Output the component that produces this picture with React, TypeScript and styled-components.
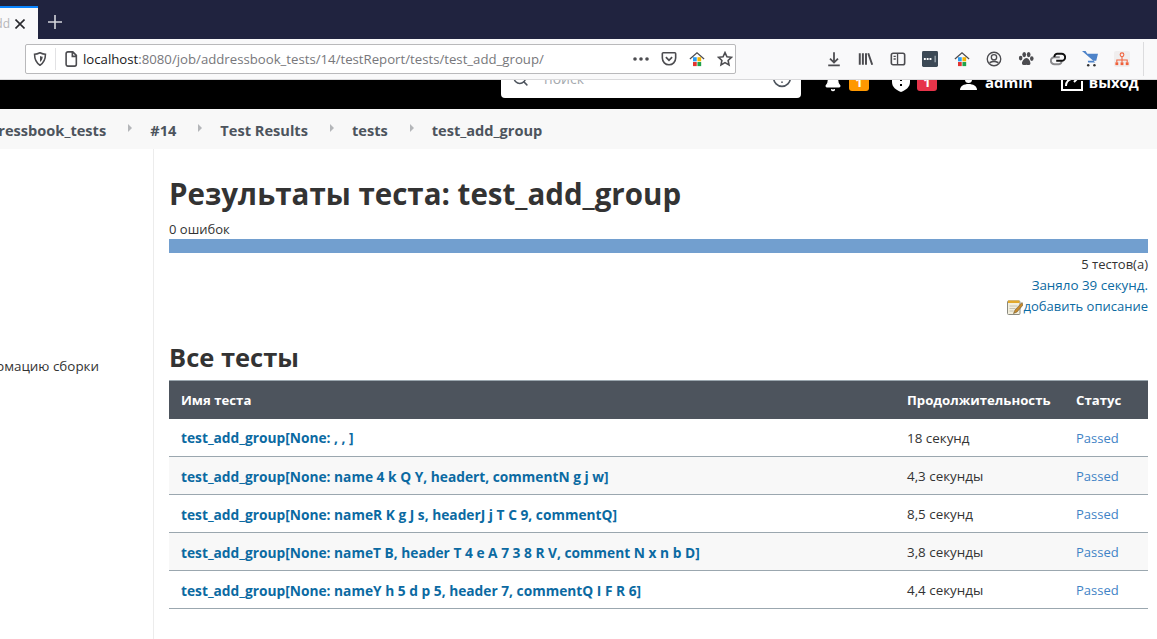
import React from 'react';
import styled, { createGlobalStyle } from 'styled-components';
import { Bell, CircleHelp, Search } from 'lucide-react';

const GlobalStyle = createGlobalStyle`
    html, body {
        background: #fff;
        height: 100%;
        margin: 0;
        overflow: hidden;
    }
    body {
        color: #333;
        font-family: "Open Sans", "Noto Sans", sans-serif;
        font-size: 13px;
    }
`;

const Page = styled.div`
    display: flex;
    flex-direction: column;
    height: 639px;
    overflow: hidden;
    width: 1157px;
`;

/* browser chrome */
const TabStrip = styled.div`
    align-items: flex-end;
    background: #20233f;
    display: flex;
    flex: none;
    height: 39px;
`;

const ActiveTab = styled.div`
    align-items: center;
    background: #f9f9fa;
    border-top: 2px solid #0a84ff;
    box-sizing: border-box;
    display: flex;
    height: 33px;
    justify-content: flex-end;
    overflow: hidden;
    padding-right: 13px;
    width: 38px;
`;

const TabTitle = styled.span`
    color: #b5b5b8;
    font-size: 12px;
    margin-right: 5px;
`;

const NewTab = styled.div`
    align-self: center;
    display: flex;
    margin: 5px 0 0 10px;
`;

const Toolbar = styled.div`
    align-items: center;
    background: #f9f9fa;
    border-bottom: 1px solid #d9d9db;
    box-sizing: border-box;
    display: flex;
    flex: none;
    height: 41px;
    overflow: hidden;
    padding: 0 0 1px 25px;
`;

const UrlBar = styled.div`
    align-items: center;
    background: #fff;
    border: 1px solid #b9b9bb;
    border-radius: 2px;
    box-sizing: border-box;
    display: flex;
    flex: none;
    height: 30px;
    padding: 0 2px 0 7px;
    width: 711px;
`;

const Divider = styled.span`
    background: #e2e2e4;
    height: 22px;
    margin: 0 7px 0 8px;
    width: 1px;
`;

const Url = styled.span`
    color: #77777b;
    flex: 1;
    font-family: "Open Sans", sans-serif;
    font-size: 13.2px;
    margin-left: 4px;
    white-space: nowrap;
`;

const Host = styled.span`
    color: #18181a;
`;

const UrlActions = styled.div`
    align-items: center;
    display: flex;
    gap: 12px;
`;

const ToolIcons = styled.div`
    align-items: center;
    display: flex;
    flex: none;
    gap: 16px;
    margin-left: 90px;
`;

const ToolbarEnd = styled.div`
    align-items: center;
    display: flex;
    flex: none;
    gap: 14px;
    margin-left: 13px;
`;

const ToolSeparator = styled.span`
    background: #dcdcde;
    height: 34px;
    width: 1px;
`;

const Dots = styled.span`
    background: repeating-linear-gradient(to bottom, #4c4c50 0 3px, transparent 3px 6px);
    height: 15px;
    width: 3px;
`;

/* jenkins header, scrolled so that only its lower part shows */
const HeaderBar = styled.header`
    align-items: flex-end;
    background: #000;
    display: flex;
    flex: none;
    height: 29px;
    overflow: hidden;
    padding-left: 501px;
`;

const SearchBox = styled.div`
    align-items: center;
    background: #fff;
    border-radius: 0 0 4px 4px;
    box-sizing: border-box;
    display: flex;
    height: 40px;
    margin-bottom: 11px;
    padding: 0 9px 0 11px;
    width: 300px;
`;

const SearchHint = styled.span`
    color: #a4a9ae;
    flex: 1;
    font-size: 14px;
    margin-left: 15px;
`;

const HeaderItem = styled.div<{ $left: number; $bottom: number }>`
    align-items: flex-end;
    color: #fff;
    display: flex;
    flex: none;
    margin-bottom: ${p => p.$bottom}px;
    margin-left: ${p => p.$left}px;
`;

const Badge = styled.span<{ $color: string }>`
    background: ${p => p.$color};
    border-radius: 0 0 3px 3px;
    color: #fff;
    font-size: 13px;
    font-weight: 700;
    height: 11px;
    line-height: 5px;
    margin-left: 7px;
    margin-bottom: 7px;
    text-align: center;
    width: 20px;
`;

const HeaderLabel = styled.span`
    font-size: 15px;
    font-weight: 700;
    line-height: 20px;
`;

const Crumbs = styled.nav`
    align-items: center;
    background: #f8f8f8;
    box-sizing: border-box;
    color: #4d545d;
    display: flex;
    flex: none;
    font-size: 14.6px;
    font-weight: 700;
    height: 40px;
    overflow: hidden;
    padding-top: 1px;
    white-space: nowrap;
`;

const Crumb = styled.span<{ $offset?: number }>`
    flex: none;
    margin-left: ${p => p.$offset ?? 0}px;
`;

const CrumbArrow = styled.span`
    border-bottom: 4px solid transparent;
    border-left: 4px solid #b4b6b9;
    border-top: 4px solid transparent;
    flex: none;
    height: 0;
    margin: -3px 18px 0 22px;
    width: 0;
`;

const Body = styled.div`
    display: flex;
    flex: 1;
    min-height: 0;
`;

const Side = styled.aside`
    border-right: 1px solid #ececec;
    display: flex;
    flex: none;
    justify-content: flex-end;
    overflow: hidden;
    padding: 208px 54px 0 0;
    white-space: nowrap;
    width: 99px;
`;

const SideLink = styled.span`
    color: #333;
    flex: none;
    font-size: 13.4px;
    height: 20px;
`;

const Main = styled.main`
    box-sizing: border-box;
    flex: 1;
    min-width: 0;
    padding: 25px 9px 0 15px;
`;

const Title = styled.h1`
    color: #333;
    font-size: 29.5px;
    font-weight: 700;
    line-height: 40px;
    margin: 0;
`;

const FailCount = styled.div`
    line-height: 18px;
    margin-top: 6px;
`;

const ProgressBar = styled.div`
    background: #729fcf;
    height: 14px;
    margin-top: 1px;
`;

const Summary = styled.div`
    align-items: flex-end;
    display: flex;
    flex-direction: column;
    line-height: 21px;
    margin-top: 1px;
`;

const Link = styled.a`
    color: #0b6aa2;
    text-decoration: none;
`;

const DurationLink = styled(Link)`
    font-size: 13.4px;
`;

const DescriptionLink = styled(Link)`
    align-items: center;
    display: flex;
`;

const Subtitle = styled.h2`
    color: #333;
    font-size: 25.5px;
    font-weight: 700;
    line-height: 34px;
    margin: 23px 0 6px;
`;

const Table = styled.table`
    border-collapse: collapse;
    table-layout: fixed;
    width: 979px;
`;

const HeadCell = styled.th<{ $width: number }>`
    background: #4d545d;
    border-top: 1px solid #9ba7af;
    box-sizing: border-box;
    color: #fff;
    font-size: 13.2px;
    font-weight: 700;
    height: 38px;
    padding: 1px 12px 0;
    text-align: left;
    width: ${p => p.$width}px;
`;

const Row = styled.tr<{ $striped: boolean }>`
    background: ${p => (p.$striped ? '#f8f8f8' : '#fff')};
    border-bottom: 1px solid #9ba7af;
`;

const Cell = styled.td`
    box-sizing: border-box;
    font-size: 13.4px;
    height: 38px;
    padding: 1px 12px 0;
    white-space: nowrap;
`;

const TestLink = styled(Link)`
    font-size: 13.75px;
    font-weight: 700;
`;

const Status = styled.span`
    color: #3f83c6;
    font-size: 13px;
`;

const rows = [
    ['test_add_group[None: , , ]', '18 секунд'],
    ['test_add_group[None: name 4 k Q Y, headert, commentN g j w]', '4,3 секунды'],
    ['test_add_group[None: nameR K g J s, headerJ j T C 9, commentQ]', '8,5 секунд'],
    ['test_add_group[None: nameT B, header T 4 e A 7 3 8 R V, comment N x n b D]', '3,8 секунды'],
    ['test_add_group[None: nameY h 5 d p 5, header 7, commentQ I F R 6]', '4,4 секунды'],
];

const Glyph = ({ children, size = 16 }: { children: React.ReactNode; size?: number }) => (
    <svg width={size} height={size} viewBox="0 0 18 18" fill="none" stroke="#4c4c50" strokeWidth="1.8">
        {children}
    </svg>
);

const HouseIcon = () => (
    <Glyph size={16}>
        <path d="M1 9 9 2l8 7" strokeWidth="1.4" />
        <rect x="4.5" y="7" width="4.2" height="4.6" fill="#2a9df4" stroke="none" />
        <rect x="9.5" y="7" width="4.2" height="4.6" fill="#f5b400" stroke="none" />
        <rect x="4.5" y="12.4" width="4.2" height="4.6" fill="#e3342f" stroke="none" />
        <rect x="9.5" y="12.4" width="4.2" height="4.6" fill="#1fa34a" stroke="none" />
    </Glyph>
);

const NotepadIcon = () => (
    <svg width="16" height="16" viewBox="0 0 16 16">
        <rect x="0.5" y="2" width="12.5" height="13.5" rx="1" fill="#f3efdd" stroke="#8a8a80" />
        <path d="M1 1.5h11.5V4H1z" fill="#e2a92c" />
        <path d="M2.5 7h8M2.5 9.5h6M2.5 12h4" stroke="#c5c2b2" />
        <path d="M15 3.5 8 11l-1.5 3.5L10 13l6-7z" fill="#c98a2b" stroke="#6d5a33" strokeWidth=".6" />
    </svg>
);

export default function App() {
    return (
        <Page>
            <GlobalStyle />
            <TabStrip>
                <ActiveTab>
                    <TabTitle>dd</TabTitle>
                    <svg width="10" height="10" viewBox="0 0 10 10" stroke="#2a2a2e" strokeWidth="1.6" style={{ flex: 'none' }}>
                        <path d="M.5.5l9 9M9.5.5l-9 9" />
                    </svg>
                </ActiveTab>
                <NewTab>
                    <svg width="14" height="14" viewBox="0 0 14 14" stroke="#d4d5db" strokeWidth="1.6">
                        <path d="M7 0v14M0 7h14" />
                    </svg>
                </NewTab>
            </TabStrip>
            <Toolbar>
                <UrlBar>
                    <Glyph size={14}>
                        <path d="M2 3c3 0 5-1 7-2 2 1 4 2 7 2 0 7-2 11-7 14C4 14 2 10 2 3z" strokeWidth="2" />
                        <path d="M9 5c1 .6 2 1 3.500 1.200C12.300 9.500 11 11.500 9 13z" fill="#4c4c50" stroke="none" />
                    </Glyph>
                    <Divider />
                    <Glyph size={16}>
                        <path d="M3.500 3a2 2 0 0 1 2-2H11l4 4v10a2 2 0 0 1-2 2H5.500a2 2 0 0 1-2-2zM10.500 1.500V6h4.500" />
                    </Glyph>
                    <Url><Host>localhost</Host>:8080/job/addressbook_tests/14/testReport/tests/test_add_group/</Url>
                    <UrlActions>
                        <svg width="16" height="4" viewBox="0 0 16 4" fill="#4c4c50">
                            <circle cx="2" cy="2" r="1.800" /><circle cx="8" cy="2" r="1.800" /><circle cx="14" cy="2" r="1.800" />
                        </svg>
                        <Glyph size={16}>
                            <path d="M2.500 2h13a1 1 0 0 1 1 1v5a7.500 7.500 0 0 1-15 0V3a1 1 0 0 1 1-1z" />
                            <path d="m5.500 7 3.500 3.500L12.500 7" strokeWidth="2" />
                        </Glyph>
                        <HouseIcon />
                        <Glyph size={16}>
                            <path d="m9 1.800 2.200 4.700 5 .6-3.700 3.500 1 5L9 13.100l-4.500 2.500 1-5L1.800 7.100l5-.6z" />
                        </Glyph>
                    </UrlActions>
                </UrlBar>
                <ToolIcons>
                    <Glyph>
                        <path d="M9 1.500v11M4.500 8.500 9 13l4.500-4.500M2.500 16.200h13" strokeWidth="2" />
                    </Glyph>
                    <Glyph>
                        <path d="M2 2.500v13M5.500 2.500v13M9 2.500v13M11.500 2.500l4.500 13" strokeWidth="2.200" />
                    </Glyph>
                    <Glyph>
                        <rect x="1.500" y="2.500" width="15" height="13" rx="2" />
                        <path d="M8.500 2.500v13M4 6h2.500M4 9h2.500" strokeWidth="1.500" />
                    </Glyph>
                    <svg width="16" height="16" viewBox="0 0 17 17">
                        <rect width="17" height="17" rx="1.500" fill="#3c4955" />
                        <path d="M2 8.500h9" stroke="#fff" strokeWidth="2" strokeDasharray="2 1" />
                        <path d="M14 5v7" stroke="#9aa4ad" strokeWidth="1.500" />
                    </svg>
                    <HouseIcon />
                    <Glyph>
                        <circle cx="9" cy="9" r="7.600" strokeWidth="1.500" />
                        <circle cx="9" cy="7" r="3" strokeWidth="1.500" />
                        <path d="M4 13.300c3-2 7-2 10 0" strokeWidth="2" />
                    </Glyph>
                    <svg width="16" height="16" viewBox="0 0 18 18" fill="#4c4c50">
                        <ellipse cx="3" cy="8" rx="2" ry="2.700" />
                        <ellipse cx="7" cy="4" rx="2.100" ry="3" />
                        <ellipse cx="12" cy="4" rx="2.100" ry="3" />
                        <ellipse cx="15.500" cy="8.500" rx="2" ry="2.700" />
                        <path d="M9.500 8c2.500 0 4.500 4 4.500 6s-2.500 2-4.500 1.500C7.500 16 4.500 16 4.500 14S7 8 9.500 8z" />
                    </svg>
                    <svg width="16" height="16" viewBox="0 0 18 18" fill="none" strokeWidth="2.200">
                        <path d="M11 7H5a3.500 3.500 0 0 0 0 8h5a3.500 3.500 0 0 0 3-4" stroke="#8b8b8e" />
                        <path d="M7 11h6a3.500 3.500 0 0 0 0-8H8a3.500 3.500 0 0 0-3 4" stroke="#111" />
                    </svg>
                    <svg width="16" height="16" viewBox="0 0 18 18">
                        <path d="M0 0h4l2 3h12l-2 8H6.500l.5 2h8" fill="#4d83c9" />
                        <circle cx="7" cy="16" r="1.400" fill="#333" />
                        <circle cx="14" cy="16" r="1.400" fill="#333" />
                    </svg>
                    <svg width="16" height="16" viewBox="0 0 17 17">
                        <rect width="17" height="17" rx="2" fill="#f0eeee" />
                        <g fill="none" stroke="#f0603a" strokeWidth="1.100">
                            <circle cx="8.500" cy="4" r="2" />
                            <path d="M8.500 6v3M3 12V9.500h11V12M8.500 9v3" />
                        </g>
                        <g fill="#f0603a">
                            <rect x="1.500" y="12" width="3" height="3" />
                            <rect x="7" y="12" width="3" height="3" />
                            <rect x="12.500" y="12" width="3" height="3" />
                        </g>
                    </svg>
                </ToolIcons>
                <ToolbarEnd>
                    <ToolSeparator />
                    <Dots />
                </ToolbarEnd>
            </Toolbar>
            <HeaderBar>
                <SearchBox>
                    <Search size={17} color="#4d545d" strokeWidth={2.200} />
                    <SearchHint>поиск</SearchHint>
                    <CircleHelp size={20} color="#4d545d" strokeWidth={2} />
                </SearchBox>
                <HeaderItem $left={23} $bottom={17}>
                    <Bell size={18} color="#fff" fill="#fff" />
                </HeaderItem>
                <HeaderItem $left={0} $bottom={11}>
                    <Badge $color="#ff9800">1</Badge>
                </HeaderItem>
                <HeaderItem $left={23} $bottom={17}>
                    <svg width="18" height="18" viewBox="0 0 18 18" fill="#fff">
                        <path d="M0 0h18v8c0 5-4 8-9 10-5-2-9-5-9-10z" />
                        <path d="M8 4h2v3H8zM8 10h2v2H8z" fill="#000" />
                    </svg>
                </HeaderItem>
                <HeaderItem $left={0} $bottom={11}>
                    <Badge $color="#e6344a">1</Badge>
                </HeaderItem>
                <HeaderItem $left={23} $bottom={19}>
                    <svg width="17" height="14" viewBox="0 0 17 14" fill="#fff">
                        <circle cx="8.500" cy="3.500" r="3.500" />
                        <path d="M0 14c0-4 4-6 8.500-6S17 10 17 14z" />
                    </svg>
                </HeaderItem>
                <HeaderItem $left={8} $bottom={17}>
                    <HeaderLabel>admin</HeaderLabel>
                </HeaderItem>
                <HeaderItem $left={28} $bottom={18}>
                    <svg width="22" height="18" viewBox="0 0 22 18" fill="none" stroke="#fff" strokeWidth="2">
                        <path d="M1 5v12h20V8M5 13c0-5 4-8 12-8M13 1l4 4-4 4" />
                    </svg>
                </HeaderItem>
                <HeaderItem $left={6} $bottom={17}>
                    <HeaderLabel>выход</HeaderLabel>
                </HeaderItem>
            </HeaderBar>
            <Crumbs>
                <Crumb $offset={-29}>addressbook_tests</Crumb>
                <CrumbArrow />
                <Crumb>#14</Crumb>
                <CrumbArrow />
                <Crumb>Test Results</Crumb>
                <CrumbArrow />
                <Crumb>tests</Crumb>
                <CrumbArrow />
                <Crumb>test_add_group</Crumb>
            </Crumbs>
            <Body>
                <Side>
                    <SideLink>Редактировать информацию сборки</SideLink>
                </Side>
                <Main>
                    <Title>Результаты теста: test_add_group</Title>
                    <FailCount>0 ошибок</FailCount>
                    <ProgressBar />
                    <Summary>
                        <span>5 тестов(а)</span>
                        <DurationLink href="#">Заняло 39 секунд.</DurationLink>
                        <DescriptionLink href="#"><NotepadIcon />добавить описание</DescriptionLink>
                    </Summary>
                    <Subtitle>Все тесты</Subtitle>
                    <Table>
                        <thead>
                            <tr>
                                <HeadCell $width={726}>Имя теста</HeadCell>
                                <HeadCell $width={169}>Продолжительность</HeadCell>
                                <HeadCell $width={84}>Статус</HeadCell>
                            </tr>
                        </thead>
                        <tbody>
                            {rows.map(([name, duration], i) => (
                                <Row key={name} $striped={i % 2 === 1}>
                                    <Cell><TestLink href="#">{name}</TestLink></Cell>
                                    <Cell>{duration}</Cell>
                                    <Cell><Status>Passed</Status></Cell>
                                </Row>
                            ))}
                        </tbody>
                    </Table>
                </Main>
            </Body>
        </Page>
    );
}
